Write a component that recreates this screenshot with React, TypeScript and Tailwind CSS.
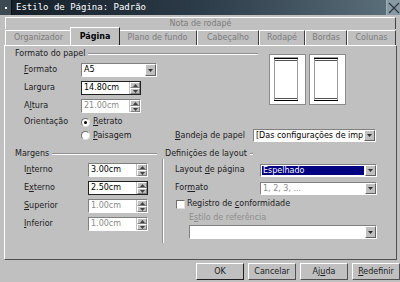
import React from "react";

const U = ({ children }: { children: React.ReactNode }) => <span className="underline underline-offset-[1px]">{children}</span>;

function SpinBtn() {
  return (
    <div className="flex w-[11px] flex-col border-l border-[#c0c0c0] bg-[#c0c0c0]">
      <div className="flex h-1/2 items-center justify-center border border-b-[#808080] border-l-white border-r-[#808080] border-t-white">
        <svg width="5" height="3" viewBox="0 0 5 3"><path d="M2.5 0 L5 3 L0 3Z" fill="#404040" /></svg>
      </div>
      <div className="flex h-1/2 items-center justify-center border border-b-[#808080] border-l-white border-r-[#808080] border-t-white">
        <svg width="5" height="3" viewBox="0 0 5 3"><path d="M0 0 L5 0 L2.5 3Z" fill="#404040" /></svg>
      </div>
    </div>
  );
}

function Spin({ value, gray, focus }: { value: string; gray?: boolean; focus?: boolean }) {
  return (
    <div
      className={`flex h-[14px] w-[60px] border bg-white ${
        focus ? "border-[#202020]" : "border-b-white border-l-[#808080] border-r-white border-t-[#808080]"
      }`}
    >
      <div className={`flex-1 pl-[2px] leading-[12px] ${gray ? "text-[#8a8a8a]" : "text-black"}`}>{value}</div>
      <SpinBtn />
    </div>
  );
}

function DropBtn() {
  return (
    <div className="flex w-[11px] items-center justify-center border border-b-[#606060] border-l-white border-r-[#606060] border-t-white bg-[#c0c0c0]">
      <svg width="5" height="3" viewBox="0 0 5 3"><path d="M0 0 L5 0 L2.5 3Z" fill="#303030" /></svg>
    </div>
  );
}

function Combo({
  value,
  w,
  h = "h-[14px]",
  gray,
  selected,
}: {
  value: string;
  w: string;
  h?: string;
  gray?: boolean;
  selected?: boolean;
}) {
  return (
    <div className={`flex ${h} ${w} border border-b-white border-l-[#808080] border-r-white border-t-[#808080] bg-white`}>
      <div className="flex flex-1 overflow-hidden p-[1px]">
        <div
          className={`flex-1 whitespace-nowrap pl-[1px] leading-[10px] ${
            selected ? "bg-[#000080] text-white" : gray ? "text-[#8a8a8a]" : "text-black"
          }`}
        >
          {value}
        </div>
      </div>
      <DropBtn />
    </div>
  );
}

function Heading({ text, w }: { text: string; w: string }) {
  return (
    <div className={`flex h-[11px] items-center ${w}`}>
      <span className="whitespace-nowrap leading-[11px] text-[#202020]">{text}</span>
      <div className="ml-[3px] flex-1 border-b border-t border-b-white border-t-[#909090]" />
    </div>
  );
}

function Radio({ on }: { on?: boolean }) {
  return (
    <div className="flex h-[9px] w-[9px] items-center justify-center rounded-full border border-b-[#e0e0e0] border-l-[#707070] border-r-[#e0e0e0] border-t-[#707070] bg-white">
      {on && <div className="h-[3px] w-[3px] rounded-full bg-black" />}
    </div>
  );
}

function PagePreview() {
  return (
    <svg width="37" height="51" viewBox="0 0 37 51">
      <rect x="0.5" y="0.5" width="36" height="50" fill="white" stroke="#8a8a8a" />
      <rect x="5.5" y="3.5" width="23" height="43" fill="white" stroke="#9a9a9a" />
      <line x1="5" y1="4.5" x2="29" y2="4.5" stroke="#000" strokeWidth="1" />
      <line x1="6" y1="6.5" x2="28" y2="6.5" stroke="#505050" strokeWidth="1" />
      <line x1="6" y1="44.5" x2="28" y2="44.5" stroke="#505050" strokeWidth="1" />
      <line x1="5" y1="46.5" x2="29" y2="46.5" stroke="#000" strokeWidth="1" />
    </svg>
  );
}

function Tab({ label, w, selected }: { label: string; w: string; selected?: boolean }) {
  if (selected) {
    return (
      <div
        className={`relative z-10 -mx-[2px] -mt-[2px] flex h-[18px] ${w} items-center justify-center border-l border-r border-t border-l-white border-r-[#202020] border-t-white bg-[#c0c0c0] font-bold text-black`}
      >
        {label}
      </div>
    );
  }
  return (
    <div
      className={`flex h-[15px] ${w} items-center justify-center border-l border-r border-t border-l-white border-r-[#404040] border-t-white text-[#7c7c7c]`}
    >
      {label}
    </div>
  );
}

function Button({ label, def }: { label: React.ReactNode; def?: boolean }) {
  return (
    <div
      className={`flex h-[17px] w-[48px] items-center justify-center border ${
        def ? "border-b-[#202020] border-l-white border-r-[#202020] border-t-white" : "border-b-[#505050] border-l-white border-r-[#505050] border-t-white"
      } text-[#202020]`}
    >
      {label}
    </div>
  );
}

export default function App() {
  return (
    <div
      className="flex h-[282px] w-[400px] flex-col overflow-hidden bg-[#c0c0c0] text-[8px] text-[#202020]"
      style={{ fontFamily: '"DejaVu Sans", sans-serif' }}
    >
      {/* Title bar */}
      <div className="flex h-[15px] items-center bg-gradient-to-r from-[#141e28] via-[#2c3c48] to-[#5d717d]">
        <div className="flex h-[15px] w-[12px] items-center justify-center border-r border-[#0a0f14] bg-[#3c4852]">
          <div className="h-[2px] w-[2px] bg-white" />
        </div>
        <div
          className="ml-[4px] flex-1 text-[9px] leading-[15px] text-white"
          style={{ fontFamily: '"DejaVu Sans Mono", monospace' }}
        >
          Estilo de Página: Padrão
        </div>
        <div className="flex h-[15px] w-[14px] items-center justify-center border-l border-[#a0b0b8] bg-[#8a9aa4]">
          <svg width="12" height="12" viewBox="0 0 12 12">
            <path d="M1 1 L11 11 M11 1 L1 11" stroke="#2a3640" strokeWidth="1.2" />
          </svg>
        </div>
      </div>

      {/* Tabs */}
      <div className="ml-[5px] mt-[2px] flex w-[391px] flex-col">
        <div className="flex h-[12px] items-center justify-center border-l border-r border-t border-l-white border-r-[#404040] border-t-white text-[#7c7c7c]">
          Nota de rodapé
        </div>
        <div className="flex items-end">
          <Tab label="Organizador" w="w-[67px]" />
          <Tab label="Página" w="w-[50px]" selected />
          <Tab label="Plano de fundo" w="w-[79px]" />
          <Tab label="Cabeçalho" w="w-[62px]" />
          <Tab label="Rodapé" w="w-[46px]" />
          <Tab label="Bordas" w="w-[42px]" />
          <Tab label="Colunas" w="w-[49px]" />
        </div>
      </div>

      {/* Panel */}
      <div className="ml-[4px] flex h-[215px] w-[393px] flex-col border border-b-[#505050] border-l-white border-r-[#505050] border-t-white pl-[10px] pt-[2px]">
        <div className="flex">
          <div className="flex w-[243px] flex-col">
            <Heading text="Formato do papel" w="w-[243px]" />
            <div className="mt-[4px] flex h-[14px] items-center pl-[9px]">
              <div className="w-[57px]">
                <U>F</U>ormato
              </div>
              <Combo value="A5" w="w-[76px]" />
            </div>
            <div className="mt-[4px] flex h-[14px] items-center pl-[9px]">
              <div className="w-[57px]">Largura</div>
              <Spin value="14.80cm" focus />
            </div>
            <div className="mt-[4px] flex h-[14px] items-center pl-[9px]">
              <div className="w-[57px]">
                A<U>l</U>tura
              </div>
              <Spin value="21.00cm" gray />
            </div>
            <div className="mt-[3px] flex h-[12px] items-center pl-[9px]">
              <div className="w-[57px]">Orientação</div>
              <Radio on />
              <span className="ml-[3px]">
                <U>R</U>etrato
              </span>
            </div>
          </div>
          <div className="ml-[11px] mt-[6px] flex gap-[3px]">
            <PagePreview />
            <PagePreview />
          </div>
        </div>
        <div className="mt-[1px] flex h-[13px] items-center pl-[9px]">
          <div className="w-[57px]" />
          <Radio />
          <span className="ml-[3px] w-[82px]">
            <U>P</U>aisagem
          </span>
          <span className="w-[78px]">
            <U>B</U>andeja de papel
          </span>
          <Combo value="[Das configurações de imp" w="w-[123px]" h="h-[13px]" />
        </div>

        {/* Lower section */}
        <div className="mt-[6px] flex">
          <div className="flex w-[142px] flex-col">
            <Heading text="Margens" w="w-[142px]" />
            <div className="mt-[4px] flex h-[14px] items-center pl-[9px]">
              <div className="w-[64px]">
                I<U>n</U>terno
              </div>
              <Spin value="3.00cm" />
            </div>
            <div className="mt-[4px] flex h-[14px] items-center pl-[9px]">
              <div className="w-[64px]">
                E<U>x</U>terno
              </div>
              <Spin value="2.50cm" focus />
            </div>
            <div className="mt-[4px] flex h-[14px] items-center pl-[9px]">
              <div className="w-[64px]">
                <U>S</U>uperior
              </div>
              <Spin value="1.00cm" gray />
            </div>
            <div className="mt-[4px] flex h-[14px] items-center pl-[9px]">
              <div className="w-[64px]">
                <U>I</U>nferior
              </div>
              <Spin value="1.00cm" gray />
            </div>
          </div>
          <div className="ml-[5px] mt-[11px] h-[84px] border-l border-r border-l-[#909090] border-r-white" />
          <div className="ml-[1px] flex flex-1 flex-col">
            <Heading text="Definições de layout" w="w-[88px]" />
            <div className="mt-[4px] flex h-[14px] items-center pl-[10px]">
              <div className="w-[85px]">
                Layout <U>d</U>e página
              </div>
              <Combo value="Espelhado" w="w-[117px]" h="h-[13px]" selected />
            </div>
            <div className="mt-[4px] flex h-[14px] items-center pl-[10px]">
              <div className="w-[85px]">
                For<U>m</U>ato
              </div>
              <Combo value="1, 2, 3, ..." w="w-[117px]" h="h-[13px]" gray />
            </div>
            <div className="mt-[4px] flex h-[10px] items-center pl-[11px]">
              <div className="h-[9px] w-[9px] border border-b-[#e0e0e0] border-l-[#707070] border-r-[#e0e0e0] border-t-[#707070] bg-white" />
              <span className="ml-[2px]">
                Registro de <U>c</U>onformidade
              </span>
            </div>
            <div className="mt-[3px] flex h-[11px] items-center pl-[24px] text-[#8e8e8e]">
              E<U>s</U>tilo de referência
            </div>
            <div className="mt-[2px] pl-[24px]">
              <Combo value="" w="w-[188px]" />
            </div>
          </div>
        </div>
      </div>

      {/* Buttons */}
      <div className="mt-[3px] flex gap-[4px] pl-[196px]">
        <Button label="OK" def />
        <Button label="Cancelar" />
        <Button
          label={
            <span>
              Aj<U>u</U>da
            </span>
          }
        />
        <Button
          label={
            <span>
              <U>R</U>edefinir
            </span>
          }
        />
      </div>
    </div>
  );
}
